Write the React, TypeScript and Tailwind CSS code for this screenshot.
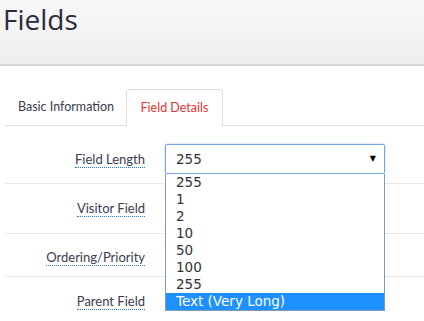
import { useState } from 'react';

const OPTIONS = ['255', '1', '2', '10', '50', '100', '255', 'Text (Very Long)'] as const;

const ROWS = [
  { label: 'Field Length', pad: 'pt-[18px] pb-[9px]' },
  { label: 'Visitor Field', pad: 'h-[50px] pb-[1px]' },
  { label: 'Ordering/Priority', pad: 'h-[43px] pt-[3px]' },
  { label: 'Parent Field', pad: 'h-[45px] pt-[3px]' },
] as const;

function Label({ text }: { text: string }) {
  return (
    <span className="border-b border-dotted border-[#2a7fc0] text-[13px] leading-[15px] text-[#3b3b4f]">
      {text}
    </span>
  );
}

export default function App() {
  const [selected] = useState(7);

  return (
    <div className="relative h-[321px] w-[424px] overflow-hidden bg-white font-['Lato',sans-serif]">
      {/* page title bar */}
      <header className="h-[66px] border-b-2 border-[#d4d4d4] bg-gradient-to-b from-[#f8f8f8] to-[#eeeeee] pl-[3px] pt-[1px]">
        <h1 className="font-['Open_Sans',sans-serif] text-[28px] leading-[37px] text-[#2b2b3b]">Fields</h1>
      </header>

      {/* tabs */}
      <nav className="ml-[5px] mt-[24px] flex h-[36px] items-end border-b border-[#dddddd] pl-[4px]">
        <button className="h-[35px] w-[110px] pl-[9px] text-left text-[12.5px] text-[#3b3b4f]">Basic Information</button>
        <button className="-mb-px ml-[7px] h-[37px] w-[97px] rounded-t-[4px] border border-b-0 border-[#dddddd] bg-white text-[12.5px] text-[#e8352f]">
          Field Details
        </button>
      </nav>

      {/* form rows */}
      <div className="ml-[5px]">
        {ROWS.map((r, i) => (
          <div
            key={r.label}
            className={`flex ${r.pad} items-center ${i < ROWS.length - 1 ? 'border-b border-[#e8e8e8]' : ''}`}
          >
            <div className="flex w-[140px] justify-end pt-[2px]">
              <Label text={r.label} />
            </div>
            {i === 0 && (
              <div className="ml-[20px] flex h-[30px] w-[220px] items-center justify-between rounded-[2px] border border-[#76a6e8] bg-white pl-[10px] pr-[8px] font-['DejaVu_Sans',sans-serif] text-[13.5px] text-[#333333] shadow-[0_0_2px_#9cc2f2]">
                <span>255</span>
                <span className="text-[8px] text-black">▼</span>
              </div>
            )}
          </div>
        ))}
      </div>

      {/* open dropdown list */}
      <ul className="absolute left-[165px] top-[174px] w-[220px] border border-t-0 border-[#7f9db9] bg-white font-['DejaVu_Sans',sans-serif] text-[13.5px] text-[#333333]">
        {OPTIONS.map((o, i) => (
          <li
            key={i}
            className={`h-[17px] pl-[10px] leading-[17px] ${i === selected ? 'bg-[#1e90ff] text-white' : ''}`}
          >
            {o}
          </li>
        ))}
      </ul>
    </div>
  );
}
